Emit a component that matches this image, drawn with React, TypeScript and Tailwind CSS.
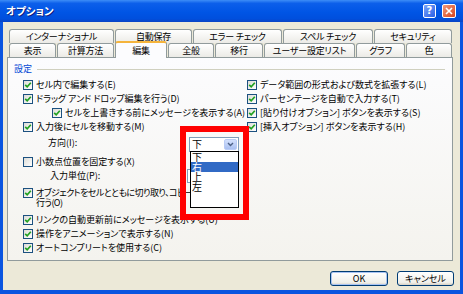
import React from "react";

function Check({ on = true }: { on?: boolean }) {
  return (
    <span className="w-[10px] h-[10px] shrink-0 border border-[#1C5180] bg-[linear-gradient(135deg,#DCDCD7,#FFFFFF)] flex items-center justify-center">
      {on && (
        <svg width="8" height="8" viewBox="0 0 8 8">
          <path d="M1.2 3.8 L3.2 5.8 L6.8 1.8" fill="none" stroke="#21A121" strokeWidth="1.7" />
        </svg>
      )}
    </span>
  );
}

function Row({ children, on = true, indent = false }: { children: React.ReactNode; on?: boolean; indent?: boolean }) {
  return (
    <div className={indent ? "h-[14px] flex items-center pl-[29px] whitespace-nowrap" : "h-[14px] flex items-center whitespace-nowrap"}>
      <Check on={on} />
      <span className="ml-[3px]">{children}</span>
    </div>
  );
}

function Tab({ label, w, sel = false }: { label: string; w: string; sel?: boolean }) {
  if (sel) {
    return (
      <div className={`${w} h-[17px] -mb-px relative z-10 flex items-center justify-center border border-[#919B9C] border-b-0 border-t-[2px] border-t-[#F5B43C] rounded-t-[3px] bg-[#FCFCFE]`}>
        {label}
      </div>
    );
  }
  return (
    <div className={`${w} h-[14px] flex items-center justify-center border border-[#919B9C] border-b-0 rounded-t-[3px] bg-[linear-gradient(#FFFFFF,#ECEBE6)]`}>
      {label}
    </div>
  );
}

export default function App() {
  return (
    <div className="w-[463px] h-[294px] flex flex-col bg-[#0A55E0] overflow-hidden [font-family:'Noto_Sans_CJK_JP','Noto_Sans_CJK_SC',sans-serif] [font-feature-settings:'palt'] text-black">
      {/* title bar */}
      <div className="h-[22px] shrink-0 flex items-center pl-[6px] pr-[7px] bg-[linear-gradient(to_bottom,#3D8DF7_0%,#0C5FEA_15%,#0055E5_55%,#004FDD_85%,#0A44C4_100%)]">
        <span className="text-white font-bold text-[10.5px] [text-shadow:1px_1px_0_#0A1E80]">オプション</span>
        <div className="ml-auto flex gap-[6px]">
          <div className="w-[13px] h-[14px] rounded-[2px] border border-white bg-[linear-gradient(135deg,#7AA6FA,#2A5EE6)] flex items-center justify-center text-white font-bold text-[10px] leading-none [font-family:'DejaVu_Sans',sans-serif]">
            ?
          </div>
          <div className="w-[14px] h-[14px] rounded-[2px] border border-white bg-[linear-gradient(135deg,#F2997A,#D6441E)] flex items-center justify-center">
            <svg width="8" height="8" viewBox="0 0 8 8">
              <path d="M1 1 L7 7 M7 1 L1 7" stroke="white" strokeWidth="1.6" />
            </svg>
          </div>
        </div>
      </div>

      {/* body */}
      <div className="flex-1 mx-[3px] mb-[4px] bg-[#ECE9D8] flex flex-col pt-[7px]">
        {/* tabs */}
        <div className="h-[28px] flex flex-col pl-[6px] text-[9px] tracking-[-0.2px]">
          <div className="flex gap-px h-[14px]">
            <Tab label="インターナショナル" w="w-[105px]" />
            <Tab label="自動保存" w="w-[77px]" />
            <Tab label="エラー チェック" w="w-[89px]" />
            <Tab label="スペル チェック" w="w-[90px]" />
            <Tab label="セキュリティ" w="w-[78px]" />
          </div>
          <div className="flex gap-px h-[14px] items-end relative z-10">
            <Tab label="表示" w="w-[47px]" />
            <Tab label="計算方法" w="w-[57px]" />
            <Tab label="編集" w="w-[52px]" sel />
            <Tab label="全般" w="w-[46px]" />
            <Tab label="移行" w="w-[48px]" />
            <Tab label="ユーザー設定リスト" w="w-[91px]" />
            <Tab label="グラフ" w="w-[49px]" />
            <Tab label="色" w="w-[46px]" />
          </div>
        </div>

        {/* panel */}
        <div className="relative ml-[4px] mr-[7px] h-[204px] border border-[#919B9C] bg-[linear-gradient(#FCFCFE,#F4F3EE)] text-[9px]">
          <div className="flex items-center h-[12px] mt-[5px] pl-[6px] pr-[7px]">
            <span className="text-[#0046D5]">設定</span>
            <span className="flex-1 h-px bg-[#D0D0BF] ml-[5px]" />
          </div>

          <div className="mt-[3px] pl-[15px] grid grid-cols-[224px_1fr]">
            <Row>セル内で編集する(E)</Row>
            <Row>データ範囲の形式および数式を拡張する(L)</Row>
            <Row>ドラッグ アンド ドロップ編集を行う(D)</Row>
            <Row>パーセンテージを自動で入力する(T)</Row>
            <Row indent>セルを上書きする前にメッセージを表示する(A)</Row>
            <Row>[貼り付けオプション] ボタンを表示する(S)</Row>
            <Row>入力後にセルを移動する(M)</Row>
            <Row>[挿入オプション] ボタンを表示する(H)</Row>
          </div>

          <div className="pl-[15px]">
            {/* 方向 */}
            <div className="h-[20px] flex items-center pl-[25px]">
              <span className="w-[141px] shrink-0 mt-[-2px]">方向(I):</span>
              <div className="relative w-[50px] h-[15px] border border-[#7F9DB9] bg-white flex items-center">
                <span className="pl-[2px] text-[10px] leading-none">下</span>
                <span className="ml-auto mr-px w-[13px] h-[11px] rounded-[2px] border border-[#B9CCF6] bg-[linear-gradient(#D3E0FC,#A9C0F1)] flex items-center justify-center">
                  <svg width="7" height="5" viewBox="0 0 7 5">
                    <path d="M1 1 L3.5 3.5 L6 1" fill="none" stroke="#4D6185" strokeWidth="1.4" />
                  </svg>
                </span>
                {/* dropdown list */}
                <div className="absolute left-0 top-full w-[49px] h-[57px] border border-black bg-white z-20 text-[10px] leading-[10px]">
                  <div className="h-[10px] pl-[1px]">下</div>
                  <div className="h-[10px] pl-[1px] bg-[#316AC5] text-white">右</div>
                  <div className="h-[10px] pl-[1px]">上</div>
                  <div className="h-[10px] pl-[1px]">左</div>
                </div>
              </div>
            </div>

            <div className="mt-px">
              <Row on={false}>小数点位置を固定する(X)</Row>
            </div>

            <div className="h-[14px] flex items-center pl-[27px]">
              <span className="w-[137px] shrink-0">入力単位(P):</span>
              <span className="w-[40px] h-[14px] border border-[#7F9DB9] bg-white" />
            </div>

            <div className="mt-[5px] flex items-start">
              <span className="mt-[-0.5px]"><Check /></span>
              <span className="ml-[3px] leading-[9.5px] whitespace-nowrap tracking-[-0.55px]">
                オブジェクトをセルとともに切り取り、コピー、並べ替えを
                <br />
                行う(O)
              </span>
            </div>

            <div className="mt-[6px]">
              <Row>リンクの自動更新前にメッセージを表示する(U)</Row>
              <Row>操作をアニメーションで表示する(N)</Row>
              <Row>オートコンプリートを使用する(C)</Row>
            </div>
          </div>

          {/* red highlight */}
          <div className="absolute left-[172px] top-[68px] w-[69px] h-[94px] border-[6px] border-[#FF0000] z-30 pointer-events-none" />
        </div>

        {/* buttons */}
        <div className="mt-[10px] flex justify-end gap-[9px] pr-[6px] text-[9px]">
          <div className="w-[58px] h-[15px] rounded-[3px] border border-[#003C74] bg-[linear-gradient(#FFFFFF,#F0F0EA_80%,#D6D0C5)] shadow-[inset_0_0_0_1px_#A9C4F3] flex items-center justify-center">
            OK
          </div>
          <div className="w-[57px] h-[15px] rounded-[3px] border border-[#003C74] bg-[linear-gradient(#FFFFFF,#F0F0EA_80%,#D6D0C5)] flex items-center justify-center">
            キャンセル
          </div>
        </div>
      </div>
    </div>
  );
}
